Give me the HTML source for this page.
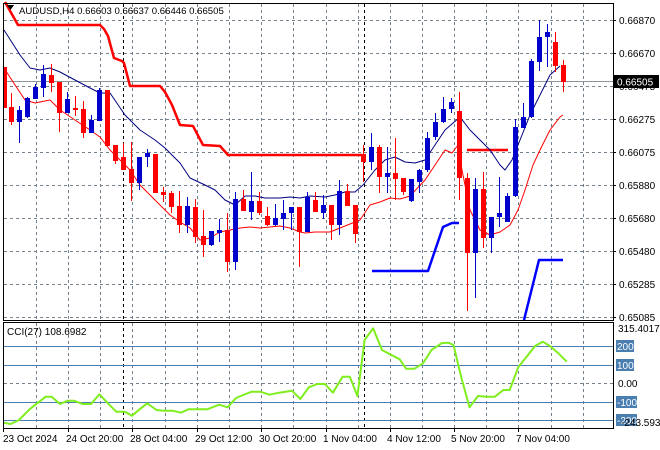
<!DOCTYPE html>
<html><head><meta charset="utf-8"><style>
html,body{margin:0;padding:0;background:#fff;width:660px;height:450px;overflow:hidden}
svg text{font-family:"Liberation Sans",sans-serif;font-size:10px;fill:#000}
</style></head><body>
<svg width="660" height="450" xmlns="http://www.w3.org/2000/svg" shape-rendering="crispEdges">
<rect width="660" height="450" fill="#fff"/>
<g stroke="#74808c" stroke-width="1" stroke-dasharray="3,3" fill="none">
<path d="M4 20.5H613M4 53.5H613M4 86.5H613M4 119.5H613M4 152.5H613M4 185.5H613M4 218.5H613M4 251.5H613M4 284.5H613M4 317.5H613"/>
<path d="M36.5 4V320M68.5 4V320M100.5 4V320M132.5 4V320M165.5 4V320M197.5 4V320M229.5 4V320M261.5 4V320M293.5 4V320M326.5 4V320M358.5 4V320M390.5 4V320M422.5 4V320M454.5 4V320M486.5 4V320M518.5 4V320M551.5 4V320M583.5 4V320"/>
<path d="M36.5 323V428M68.5 323V428M100.5 323V428M132.5 323V428M165.5 323V428M197.5 323V428M229.5 323V428M261.5 323V428M293.5 323V428M326.5 323V428M358.5 323V428M390.5 323V428M422.5 323V428M454.5 323V428M486.5 323V428M518.5 323V428M551.5 323V428M583.5 323V428"/>
<path d="M4 383.5H613"/>
</g>
<g stroke="#000" stroke-dasharray="3,3"><path d="M123.5 4V428M364.5 4V428"/></g>
<g stroke="#4a7eb0"><path d="M4 346.5H613M4 365.5H613M4 402.5H613M4 420.5H613"/></g>
<path d="M4 81.5H613" stroke="#8a949c"/>
<g fill="none" stroke-linejoin="round" shape-rendering="auto">
<polyline stroke="#ff0000" stroke-width="2.5" points="5,2 18,25 100,25 104,29 108,36 114,58 122,61 124,63 130,86 160,86 165,92 172,105 180,125 193,126 203,145 220,146 228,155 362,155"/>
<polyline stroke="#ff0000" stroke-width="2.5" points="467,150 508,150"/>
<polyline stroke="#0000ff" stroke-width="2.5" points="372,271 428,271 443,227 452,223 459,223"/>
<polyline stroke="#0000ff" stroke-width="2.5" points="524,320 539,260 563,260"/>
<polyline stroke="#000080" stroke-width="1" points="4,30 20,55 30,68 40,70 50,68 60,72 75,80 90,88 100,93 110,93 125,115 140,130 155,140 165,148 180,163 190,178 205,185 215,190 225,200 235,205 245,196 255,196 265,198 280,198 290,197 300,198 310,196 325,197 335,195 345,192 355,192 363,185 375,170 385,160 395,157 405,162 415,163 425,160 435,145 445,130 460,117 470,130 480,140 490,150 500,165 505,170 512,160 520,140 530,115 540,95 550,75 560,66"/>
<polyline stroke="#ff0000" stroke-width="1" points="4,68 15,85 25,100 35,103 50,100 60,110 75,120 90,130 100,137 110,150 120,160 130,170 140,185 150,195 160,205 170,215 180,222 190,228 200,240 210,238 220,232 230,230 240,228 250,227 260,228 280,226 290,228 300,232 305,233 315,232 330,232 345,226 360,220 370,205 380,202 390,198 400,199 410,196 425,180 435,165 445,150 452,153 458,145 462,170 470,210 480,230 490,235 500,232 510,225 518,210 525,190 533,165 540,150 550,130 560,117 563,115"/>
<polyline stroke="#7fee1e" stroke-width="2" points="3.4,422.7 10.6,424 19,420 29.6,409.3 38,402.7 45.7,396.7 51.6,396.7 60,404 67.7,400.7 74,400.7 82.5,404 91,404 99.4,394.3 107.9,403.3 116.3,411.7 124.8,411.7 132,415.7 139.6,409.3 147.2,403.3 156.5,410 164.1,410.7 172.6,410.7 181,412.7 188.2,409.3 196.7,409.3 207.3,409.3 219.1,404.7 227.6,407.3 236,398 243.2,395 251.7,391.7 260.2,391.7 269.5,394.7 279.2,392.7 291.9,390.7 300.3,399 308.8,387.3 317.3,384 324.9,384 332.9,392.7 342.6,376.7 349.8,376.7 357.4,396 364.6,340 373.1,328.3 382,350 390,354.3 399.7,359.3 406.1,368.7 414.5,368.7 423,363.3 431.5,350 442,343 448.4,342.7 453.5,345 461.1,376.7 469.5,407.3 478,396 486.5,396.7 494.9,396.7 503.4,390 509.7,390 518.2,367.3 526.6,356.7 535.1,346 542.7,341.7 549.9,346 558.4,353.3 566.8,361.7"/>
</g>
<path stroke="#ff0000" fill="none" d="M11.5 93V125M51.5 64V92M59.5 82V132M75.5 96V116M83.5 101V138M107.5 90V147M115.5 145V164M123.5 143V170M131.5 142V201M155.5 154V193M163.5 187V202M171.5 191V213M179.5 191V233M195.5 199V243M203.5 210V257M227.5 213V272M243.5 190V211M259.5 192V215M267.5 207V226M299.5 207V267M315.5 192V212M331.5 205V240M347.5 184V206M355.5 205V243M363.5 145V182M379.5 145V193M395.5 138V200M403.5 178V195M459.5 92V200M467.5 173V311M483.5 172V248M555.5 32V72M563.5 60V92"/>
<path fill="#ff0000" d="M4 67h3v41h-3zM9 107h5v15h-5zM49 75h5v8h-5zM57 82h5v31h-5zM73 108h5v2h-5zM81 109h5v24h-5zM105 90h5v56h-5zM113 145h5v16h-5zM121 157h5v13h-5zM129 169h5v14h-5zM153 154h5v39h-5zM161 192h5v3h-5zM169 193h5v14h-5zM177 206h5v19h-5zM193 207h5v30h-5zM201 236h5v9h-5zM225 230h5v32h-5zM241 199h5v12h-5zM257 201h5v12h-5zM265 216h5v9h-5zM297 207h5v25h-5zM313 200h5v12h-5zM329 205h5v20h-5zM345 191h5v15h-5zM353 205h5v29h-5zM361 154h5v8h-5zM377 147h5v30h-5zM393 173h5v6h-5zM401 178h5v14h-5zM457 111h5v67h-5zM465 178h5v75h-5zM481 189h5v49h-5zM553 42h5v24h-5zM561 65h5v17h-5z"/>
<path stroke="#0000cc" fill="none" d="M19.5 106V143M27.5 97V118M35.5 84V99M43.5 65V97M67.5 92V113M91.5 115V133M99.5 88V121M139.5 157V190M147.5 149V167M187.5 197V233M211.5 231V246M219.5 219V242M235.5 192V270M251.5 172V220M275.5 204V226M283.5 200V230M291.5 207V230M307.5 192V232M323.5 195V219M339.5 180V235M371.5 133V170M387.5 147V193M411.5 179V202M419.5 169V193M427.5 132V172M435.5 113V140M443.5 97V123M451.5 98V113M475.5 178V298M491.5 217V253M499.5 177V227M507.5 193V222M515.5 119V197M523.5 103V128M531.5 59V118M539.5 20V71M547.5 24V67"/>
<path fill="#0000cc" d="M17 110h5v12h-5zM25 98h5v19h-5zM33 87h5v12h-5zM41 74h5v14h-5zM65 99h5v14h-5zM89 120h5v13h-5zM97 90h5v31h-5zM137 157h5v26h-5zM145 153h5v4h-5zM185 206h5v19h-5zM209 231h5v14h-5zM217 230h5v3h-5zM233 199h5v63h-5zM249 201h5v11h-5zM273 218h5v7h-5zM281 213h5v6h-5zM289 207h5v6h-5zM305 197h5v35h-5zM321 205h5v8h-5zM337 191h5v34h-5zM369 147h5v15h-5zM385 173h5v4h-5zM409 179h5v22h-5zM417 170h5v12h-5zM425 138h5v32h-5zM433 122h5v15h-5zM441 109h5v13h-5zM449 102h5v7h-5zM473 189h5v64h-5zM489 217h5v21h-5zM497 213h5v4h-5zM505 196h5v26h-5zM513 127h5v69h-5zM521 117h5v11h-5zM529 61h5v56h-5zM537 37h5v25h-5zM545 32h5v5h-5z"/>
<g stroke="#000" fill="none">
<rect x="3.5" y="3.5" width="610" height="317"/>
<rect x="3.5" y="322.5" width="610" height="106"/>
</g>
<path d="M7 5h7l-3.5 5z" fill="#000"/>
<text x="19" y="14" style="font-size:9.6px">AUDUSD,H4 0.66603 0.66637 0.66446 0.66505</text>
<text x="7" y="335" style="font-size:10px">CCI(27) 108.6982</text>
<g>
<text x="619" y="24">0.66870</text>
<text x="619" y="57">0.66670</text>
<text x="619" y="90">0.66475</text>
<text x="619" y="123">0.66275</text>
<text x="619" y="156">0.66075</text>
<text x="619" y="189">0.65880</text>
<text x="619" y="222">0.65680</text>
<text x="619" y="255">0.65480</text>
<text x="619" y="288">0.65285</text>
<text x="619" y="321">0.65085</text>
</g>
<rect x="614" y="75" width="45" height="13" fill="#000"/>
<text x="617" y="85.5" style="fill:#fff">0.66505</text>
<path d="M613 20.5h3M613 53.5h3M613 86.5h3M613 119.5h3M613 152.5h3M613 185.5h3M613 218.5h3M613 251.5h3M613 284.5h3M613 317.5h3" stroke="#000"/>
<text x="618" y="332">315.4017</text>
<g fill="#4a7eb0">
<rect x="616" y="340" width="18" height="12"/>
<rect x="616" y="359" width="18" height="12"/>
<rect x="616" y="396" width="21" height="12"/>
<rect x="616" y="414" width="21" height="12"/>
</g>
<text x="617" y="350" style="fill:#fff">200</text>
<text x="617" y="369" style="fill:#fff">100</text>
<text x="618" y="387">0.00</text>
<text x="617" y="406" style="fill:#fff">-100</text>
<text x="617" y="424" style="fill:#fff">-200</text>
<text x="621" y="426">-243.5938</text>
<g>
<text x="3" y="442">23 Oct 2024</text>
<text x="66" y="442">24 Oct 20:00</text>
<text x="130" y="442">28 Oct 04:00</text>
<text x="195" y="442">29 Oct 12:00</text>
<text x="259" y="442">30 Oct 20:00</text>
<text x="323" y="442">1 Nov 04:00</text>
<text x="387" y="442">4 Nov 12:00</text>
<text x="451" y="442">5 Nov 20:00</text>
<text x="516" y="442">7 Nov 04:00</text>
</g>
<path d="M3.5 429v3M68.5 429v3M132.5 429v3M197.5 429v3M261.5 429v3M326.5 429v3M390.5 429v3M454.5 429v3M518.5 429v3" stroke="#000"/>
</svg>
</body></html>
